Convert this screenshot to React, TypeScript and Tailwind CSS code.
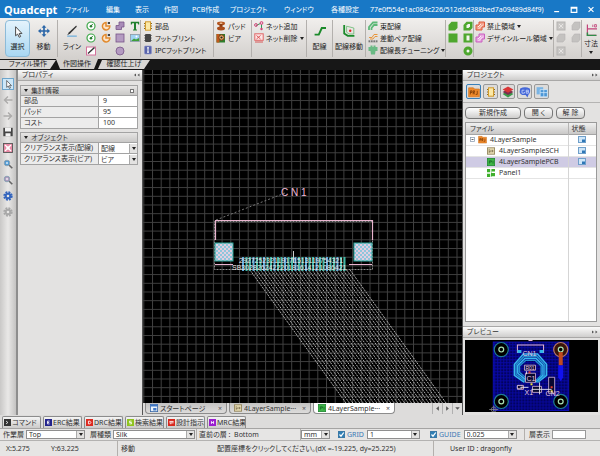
import React from "react";
import type { ReactNode } from "react";

function Ico({ children, className = "h-[10px] w-[10px]" }: { children: ReactNode; className?: string }) {
  return (
    <svg viewBox="0 0 10 10" className={`flex-none ${className}`} aria-hidden="true">
      {children}
    </svg>
  );
}

const Caret = () => (
  <svg viewBox="0 0 4 3" className="h-[3px] w-1 flex-none" aria-hidden="true">
    <path d="M0 0h4L2 3z" fill="#222" />
  </svg>
);

/* ---------- icons ---------- */

const Pointer = ({ className }: { className?: string }) => (
  <Ico className={className}>
    <path d="M3 .6v7.6l1.7-1.5L6 9.4l1.2-.6L6 6.2h2.3z" fill="#fff" stroke="#444" strokeWidth=".8" />
  </Ico>
);
const Move = () => (
  <Ico className="h-3 w-3">
    <path d="M5 0l2 2.3H5.7v2h2V3L10 5 7.7 7V5.700h-2v2H7L5 10 3 7.700h1.300v-2h-2V7L0 5l2.300-2v1.300h2v-2H3z" fill="#2c67a8" />
  </Ico>
);
const LineTool = () => (
  <Ico className="h-3 w-3">
    <path d="M1 8.500L2.500 6 8.500.500 9 1.500 3.500 7z" fill="#333" />
    <path d="M1 9.300h8" stroke="#7db4dc" strokeWidth="1.200" />
  </Ico>
);
const GreenTarget = () => (
  <Ico>
    <circle cx="5" cy="5" r="4" fill="#fff" stroke="#3fa84a" strokeWidth="1.200" />
    <circle cx="5" cy="5.200" r="1.300" fill="#267a30" />
    <path d="M5 5l1.700-2" stroke="#267a30" strokeWidth="1" />
  </Ico>
);
const OrangeArc = () => (
  <Ico>
    <path d="M5 1.500A3.700 3.700 0 1 0 8.800 5H5z" fill="#fbe3c8" stroke="#e28a2d" strokeWidth="1.500" />
    <path d="M6.800 1h2.200v2H6.800z" fill="#444" />
  </Ico>
);
const PurplePoly = () => (
  <Ico>
    <path d="M4 1h5v5H6.500v2.500H1V4.500h3z" fill="#a98bb8" stroke="#775488" strokeWidth=".8" />
  </Ico>
);
const PurpleSquare = () => (
  <Ico>
    <rect x="1" y="1" width="8" height="8" fill="#b49bc1" stroke="#775488" strokeWidth=".8" />
  </Ico>
);
const PurpleCircle = () => (
  <Ico>
    <circle cx="5" cy="5" r="4" fill="#b49bc1" stroke="#775488" strokeWidth=".8" />
  </Ico>
);
const PinkLine = () => (
  <Ico>
    <rect x=".500" y="1" width="9" height="8" fill="#fff" stroke="#d4719b" />
    <path d="M2 7.500L8.500 1.500" stroke="#333" strokeWidth="1.400" />
  </Ico>
);
const TextTool = () => (
  <Ico>
    <path d="M.800.800h8.400v2.700h-1l-.5-1.200H6v6l1 .4v.7H3v-.7l1-.4v-6H2.300l-.5 1.200h-1z" fill="#22812f" />
  </Ico>
);
const Picture = () => (
  <Ico>
    <rect x=".500" y="1.500" width="9" height="7" fill="#9fd3f2" stroke="#8b9aa3" strokeWidth=".8" />
    <path d="M1 8l3-2.500 2 1L9 5v3z" fill="#3f9f3a" />
    <circle cx="6.500" cy="3.500" r="1" fill="#fff" />
  </Ico>
);
const Part = () => (
  <Ico>
    <path d="M1 2.500h8M1 5h8M1 7.500h8" stroke="#8a6a20" strokeWidth="1" />
    <rect x="2.500" y=".8" width="5" height="8.400" fill="#fbe9a8" stroke="#d19a2d" />
  </Ico>
);
const Footprint = ({ fill = "#444" }: { fill?: string }) => (
  <Ico>
    <path d="M1 2.500h8M1 5h8M1 7.500h8" stroke="#888" strokeWidth="1" />
    <rect x="2" y="1" width="6" height="8" rx="1" fill={fill} />
  </Ico>
);
const IpcFootprint = () => (
  <Ico>
    <rect x="1.500" y="1" width="7" height="8" rx="1" fill="#5964ab" stroke="#8d96c9" strokeWidth=".6" />
    <path d="M5 2.800v4.400M4 2.800h2M4 7.200h2" stroke="#fff" strokeWidth="1" />
  </Ico>
);
const Pad = () => (
  <Ico>
    <ellipse cx="5" cy="2.500" rx="4" ry="1.900" fill="#b4551f" />
    <path d="M3.500 3h3v4h-3z" fill="#8c3c12" />
    <ellipse cx="5" cy="7.500" rx="4" ry="1.900" fill="#a94c1b" />
    <ellipse cx="5" cy="2.300" rx="1.500" ry=".7" fill="#f0c49b" />
  </Ico>
);
const Via = () => (
  <Ico>
    <rect x=".500" y="1" width="8.500" height="8.500" fill="#2f7d2c" />
    <rect x=".500" y="1" width="3" height="8.500" fill="#c2571d" />
    <circle cx="5.500" cy="4.500" r="2.700" fill="#e9b06a" stroke="#7b3511" />
    <circle cx="5.500" cy="4.500" r="1.100" fill="#222" />
  </Ico>
);
const NetAdd = () => (
  <Ico>
    <path d="M2 4.500L7.500 2v6" fill="none" stroke="#2d9a53" strokeWidth="1" />
    <circle cx="2" cy="4" r="1.400" fill="none" stroke="#d14479" />
    <circle cx="7.500" cy="2" r="1.400" fill="#f5c3d5" stroke="#d14479" />
    <circle cx="7.500" cy="8" r="1.200" fill="#d14479" />
  </Ico>
);
const NetDel = () => (
  <Ico>
    <rect x=".8" y=".8" width="8.400" height="6.500" fill="#fde4e4" stroke="#e06666" />
    <path d="M2.500 2.500l4 3.500M6.500 2.500l-4 3.500M1 9h8" stroke="#d84a4a" strokeWidth=".9" />
  </Ico>
);
const Route = () => (
  <Ico className="h-3 w-3">
    <path d="M.500 8h3.500L6.500 2.500H10" fill="none" stroke="#1b8a2a" strokeWidth="1.600" />
  </Ico>
);
const RouteMove = () => (
  <Ico className="h-3 w-3">
    <path d="M1 0v7l3 2h5.500" fill="none" stroke="#1b8a2a" strokeWidth="1.500" />
    <path d="M3 1v5l2 1.500h4V2.500z" fill="none" stroke="#6dbb74" strokeWidth=".7" />
    <circle cx="6" cy="4.800" r="1" fill="#d22" />
  </Ico>
);
const Bundle = () => (
  <Ico>
    <path d="M1 9V6L5 1.500h4.500M3.500 9V7L6 4h3.500" fill="none" stroke="#5cb877" strokeWidth="1.800" />
  </Ico>
);
const Pair = () => (
  <Ico>
    <path d="M1 4.500h3L6 1.500h3.500M2 6h3L7 3.500h2.500" fill="none" stroke="#e8963c" strokeWidth="1" />
    <path d="M.500 7.300h9v2h-9z" fill="#777" />
    <path d="M2.500 7v2.500M5 7v2.500M7.500 7v2.500" stroke="#e5e3e0" strokeWidth=".6" />
  </Ico>
);
const Tuning = () => (
  <Ico>
    <path d="M.500 2h2V.500h2V2h1V.500h2V2h2v4h-2l-.5 3.500h-4L2.500 6h-2z" fill="#6aba85" />
  </Ico>
);
const GreenPoly = ({ hole = false }: { hole?: boolean }) => (
  <Ico>
    <path d="M.500 4l3-3.300h6V7l-2.500 2.500H.500z" fill="#4ea72e" />
    {hole && <path d="M3.500 4.500l1.500-1.500h2v2.500L5.500 7h-2z" fill="#f3f6ee" />}
  </Ico>
);
const GreenSquare = ({ hole = false }: { hole?: boolean }) => (
  <Ico>
    <rect x=".500" y=".500" width="9" height="9" fill="#4ea72e" />
    {hole && <rect x="3.500" y="2.500" width="3" height="5" fill="#f3f6ee" />}
  </Ico>
);
const GreenRing = () => (
  <Ico>
    <circle cx="5" cy="5" r="3" fill="#f3f6ee" stroke="#4ea72e" strokeWidth="3" />
  </Ico>
);
const AreaIco = ({ fill, stroke }: { fill: string; stroke: string }) => (
  <Ico>
    <path d="M4 1h5.500v5H7v3H1V4h3z" fill={fill} stroke={stroke} />
    <path d="M3 6l3-3M3.500 8L8 3.500" stroke="#fff" strokeWidth=".8" />
  </Ico>
);
const GraySquare = () => (
  <Ico>
    <rect x="1" y="1" width="8" height="8" fill="#c9c7c5" stroke="#b5b3b1" />
    <path d="M3 3l4 4M7 3L3 7" stroke="#e6e4e2" />
  </Ico>
);
const GrayPoly = () => (
  <Ico>
    <path d="M3.500 1H9v5.500L7 9H1V4.500z" fill="#c4c2c0" stroke="#b5b3b1" strokeWidth=".6" />
  </Ico>
);
const Dimension = () => (
  <Ico className="h-3 w-3">
    <path d="M2 .500v9h7.500M2 4h8" fill="none" stroke="#c2447a" strokeWidth="1" />
    <path d="M2 7v2.500h7.500" fill="none" stroke="#2f8e48" strokeWidth="1.200" />
    <path d="M6.500.500v2M8 .500h1.500v2H8z" fill="none" stroke="#c2447a" strokeWidth=".7" />
  </Ico>
);
const Gear = ({ fill }: { fill: string }) => (
  <Ico>
    <circle cx="5" cy="5" r="3.800" fill="none" stroke={fill} strokeWidth="1.800" strokeDasharray="1.900 1.080" />
    <circle cx="5" cy="5" r="2.300" fill="none" stroke={fill} strokeWidth="2" />
  </Ico>
);
const Lens = ({ fill }: { fill: string }) => (
  <Ico>
    <path d="M6 6l3.300 3.300" stroke="#666" strokeWidth="1.600" />
    <circle cx="4" cy="4" r="2.800" fill={fill} stroke="#8ba3b5" />
    <path d="M2.700 4h2.600M4 2.700v2.600" stroke="#fff" strokeWidth=".8" />
  </Ico>
);
const Arrow = ({ d }: { d: string }) => (
  <Ico>
    <path d={d} fill="none" stroke="#adacab" strokeWidth="1.500" />
  </Ico>
);
const Disk = () => (
  <Ico>
    <path d="M.300.800h9.400v8.400H.300z" fill="#444" />
    <path d="M2 .800h6v3.700H2zM2.500 6.200h5v3h-5z" fill="#f2f2f2" />
  </Ico>
);
const Fit = () => (
  <Ico>
    <rect x=".5" y=".5" width="9" height="9" fill="#e88aa5" stroke="#555" strokeWidth=".9" />
    <path d="M2 2l6 6M8 2L2 8" stroke="#fff" strokeWidth="1.300" />
    <rect x="3.500" y="3.500" width="3" height="3" fill="#fff" />
  </Ico>
);
const Prj = ({ className }: { className?: string }) => (
  <Ico className={className}>
    <path d="M.500 1.500h4l1 1h4V9h-9z" fill="#ef8a2c" stroke="#c96a14" strokeWidth=".5" />
    <path d="M2 7V4h1.300v1.400H2M4.300 7V4h1.200v1.300H4.500L5.700 7M7.700 4v3H6.500" fill="none" stroke="#6d3204" strokeWidth=".6" />
  </Ico>
);
const Layers = () => (
  <Ico className="h-3 w-3">
    <path d="M5 4l4.500 2.700L5 9.500.500 6.700z" fill="#3a9a4a" />
    <path d="M5 2.500l4.500 2.500L5 7.500.500 5z" fill="#7a2f4c" />
    <path d="M5 .500L9.500 3 5 5.700.500 3z" fill="#d93636" />
  </Ico>
);
const GroupBubble = () => (
  <Ico className="h-3 w-3">
    <path d="M1 2q4-2 8 0 1 3-1 5L7 9.500 5.500 7.500Q1 8 .500 5z" fill="#4467d8" />
    <path d="M4.500 3.500h-2v2.500h2V5M6 3.500h1.800v2.500H6zM6 4.700h1.800" fill="none" stroke="#d9e2ff" strokeWidth=".6" />
  </Ico>
);
const Windows = () => (
  <Ico className="h-3 w-3">
    <path d="M.500 1h5.500v6H.500z" fill="#79b4e4" />
    <path d="M3.500 3h6v6h-6z" fill="#4d97d6" stroke="#d6ebfb" strokeWidth=".6" />
    <path d="M3.500 5.500h6M6.500 3v6" stroke="#d6ebfb" strokeWidth=".6" />
  </Ico>
);
const StateIco = () => (
  <svg viewBox="0 0 8 7" className="mx-auto block h-[7px] w-2" role="img" aria-label="open">
    <rect x=".5" y=".5" width="7" height="6" fill="#cfe6f8" stroke="#6f9fca" />
    <rect x="4" y="3.500" width="3" height="2.500" fill="#2e77b7" />
  </svg>
);
const SchIco = () => (
  <Ico className="h-2 w-2">
    <rect x=".5" y="1" width="9" height="8" fill="#e8dcb4" stroke="#8b7d52" />
    <path d="M2 3.500h1.500M2 5h1.500v1.500H2M5 3.500v3M7 3.500v3M7 5h1" stroke="#5c5130" fill="none" strokeWidth=".8" />
  </Ico>
);
const PcbIco = () => (
  <Ico className="h-2 w-2">
    <rect x=".5" y=".5" width="9" height="9" fill="#3fb548" stroke="#218a33" />
    <path d="M3 7V3.500h2.500v1.500H3M7.500 3.500v3.500" stroke="#176a26" fill="none" />
  </Ico>
);
const PanelIco = () => (
  <Ico className="h-2 w-2">
    <path d="M0 0h4v4H0zM6 0h4v3H6zM0 6h4v4H0zM5 5h5v4H5zM5 0h.5v10H5z" fill="#3faf2c" />
  </Ico>
);
const PageIco = () => (
  <Ico className="h-2 w-2">
    <rect x=".5" y=".5" width="9" height="9" fill="#e9f2fb" stroke="#3a68a8" />
    <path d="M.500.500h9v2.500h-9zM4 5h4v3H4z" fill="#3f76c4" />
  </Ico>
);

/* ---------- ribbon ---------- */

const Sep = () => <span className="w-px flex-none self-stretch border-l border-[#b3b0ad] bg-white" />;

function BigTool({ icon, label, active = false, className = "" }: { icon: ReactNode; label: string; active?: boolean; className?: string }) {
  return (
    <button
      type="button"
      className={`flex h-[37px] flex-none flex-col items-center justify-between overflow-hidden whitespace-nowrap pt-1 pb-[5px] ${
        active ? "rounded-sm border border-[#8dbbd8] bg-linear-to-b from-[#e4f3fc] to-[#a9d7f2]" : "border border-transparent"
      } ${className}`}
    >
      {icon}
      <span>{label}</span>
    </button>
  );
}

function SmallTool({ icon, label, menu = false }: { icon: ReactNode; label: string; menu?: boolean }) {
  return (
    <button type="button" className="flex h-3 items-center gap-[2px] whitespace-nowrap">
      {icon}
      <span>{label}</span>
      {menu && <Caret />}
    </button>
  );
}

function IconGrid({ items, className }: { items: [string, ReactNode][]; className: string }) {
  return (
    <div className={`grid flex-none grid-flow-col grid-rows-3 content-start gap-x-1 ${className}`}>
      {items.map(([name, icon], i) =>
        icon ? (
          <button key={i} type="button" aria-label={name} className="flex h-3 w-[10px] items-center">
            {icon}
          </button>
        ) : (
          <span key={i} />
        )
      )}
    </div>
  );
}

function Ribbon() {
  return (
    <div role="toolbar" aria-label="作図操作" className="flex h-[41px] flex-none overflow-hidden bg-linear-to-b from-[#f1efed] to-[#d3d0cd] py-[2px] pl-[5px] text-[#222]">
      <BigTool icon={<Pointer className="mt-px h-3 w-3" />} label="選択" active className="w-[25px]" />
      <BigTool icon={<Move />} label="移動" className="w-[27px]" />
      <Sep />
      <BigTool icon={<LineTool />} label="ライン" className="w-[28px]" />
      <IconGrid
        className="w-[54px]"
        items={[
          ["円", <GreenTarget />],
          ["円弧", <GreenTarget />],
          ["線", <PinkLine />],
          ["円弧 1", <OrangeArc />],
          ["円弧 2", <OrangeArc />],
          ["", null],
          ["多角形", <PurplePoly />],
          ["四角形", <PurpleSquare />],
          ["円形", <PurpleCircle />],
          ["文字", <TextTool />],
          ["画像", <Picture />],
        ]}
      />
      <Sep />
      <div className="flex w-[72px] flex-none flex-col pl-[2px]">
        <SmallTool icon={<Part />} label="部品" />
        <SmallTool icon={<Footprint />} label="フットプリント" />
        <SmallTool icon={<IpcFootprint />} label="IPCフットプリント" />
      </div>
      <Sep />
      <div className="flex w-[37px] flex-none flex-col pl-[2px]">
        <SmallTool icon={<Pad />} label="パッド" />
        <SmallTool icon={<Via />} label="ビア" />
      </div>
      <Sep />
      <div className="flex w-[54px] flex-none flex-col pl-[2px]">
        <SmallTool icon={<NetAdd />} label="ネット追加" />
        <SmallTool icon={<NetDel />} label="ネット削除" menu />
      </div>
      <Sep />
      <BigTool icon={<Route />} label="配線" className="w-[25px]" />
      <Sep />
      <BigTool icon={<RouteMove />} label="配線移動" className="w-8" />
      <Sep />
      <div className="flex w-[79px] flex-none flex-col pl-[2px]">
        <SmallTool icon={<Bundle />} label="束配線" />
        <SmallTool icon={<Pair />} label="差動ペア配線" />
        <SmallTool icon={<Tuning />} label="配線長チューニング" menu />
      </div>
      <Sep />
      <IconGrid
        className="w-[27px] pl-[2px]"
        items={[
          ["ベタ", <GreenPoly />],
          ["ベタ四角", <GreenSquare />],
          ["", null],
          ["ベタ抜き", <GreenPoly hole />],
          ["四角抜き", <GreenSquare hole />],
          ["円抜き", <GreenRing />],
        ]}
      />
      <Sep />
      <div className="flex w-[79px] flex-none flex-col pl-px">
        <SmallTool icon={<AreaIco fill="#f2a08a" stroke="#dd5a3c" />} label="禁止領域" menu />
        <SmallTool icon={<AreaIco fill="#e9a6e0" stroke="#c95fc0" />} label="デザインルール領域" menu />
      </div>
      <Sep />
      <IconGrid
        className="w-[27px] pl-[2px]"
        items={[
          ["編集 1", <GraySquare />],
          ["編集 2", <GrayPoly />],
          ["編集 3", <GraySquare />],
          ["編集 4", <GrayPoly />],
          ["編集 5", <GrayPoly />],
        ]}
      />
      <Sep />
      <button type="button" className="flex h-[37px] min-w-4 flex-1 flex-col items-center gap-[3px] whitespace-nowrap pt-1">
        <Dimension />
        <span>寸法</span>
        <Caret />
      </button>
    </div>
  );
}

function RibbonTabs() {
  return (
    <div role="tablist" aria-label="操作" className="flex h-[11px] flex-none bg-[#171717] leading-[10px] text-[#222]">
      <button type="button" role="tab" aria-selected="false" className="h-[10px] w-14 bg-[#d9d7d5] [clip-path:polygon(0_1px,100%_1px,50px_100%,0_100%)]">
        ファイル操作
      </button>
      <button type="button" role="tab" aria-selected="true" className="h-[10px] w-[42px] bg-[#d3d0cd] [clip-path:polygon(0_0,100%_0,38px_100%,4px_100%)]">
        作図操作
      </button>
      <button type="button" role="tab" aria-selected="false" className="h-[10px] w-[52px] bg-[#d9d7d5] [clip-path:polygon(4px_1px,100%_1px,46px_100%,0_100%)]">
        確認仕上げ
      </button>
    </div>
  );
}

/* ---------- left side ---------- */

function SideTools() {
  const items: [string, ReactNode][] = [
    ["戻る", <Arrow d="M5 1.500L1.500 5 5 8.500M1.500 5h8" />],
    ["進む", <Arrow d="M5 1.500L8.500 5 5 8.500M8.500 5h-8" />],
    ["保存", <Disk />],
    ["全体表示", <Fit />],
    ["拡大", <Lens fill="#3d8fd0" />],
    ["縮小", <Lens fill="#a58fb5" />],
    ["設定", <Gear fill="#3465bd" />],
    ["オプション", <Gear fill="#a8a8a8" />],
  ];
  return (
    <div className="flex w-[18px] flex-none flex-col items-center gap-1 border-r-2 border-[#8e8e8e] bg-linear-to-r from-[#c9c8c7] via-[#e9e8e7] to-[#c4c3c2] pt-2">
      <button type="button" aria-label="選択" className="flex h-3 w-3 flex-none items-center justify-center border border-[#6ea5cb] bg-[#cde7f8]">
        <Pointer className="h-[9px] w-[9px]" />
      </button>
      {items.map(([n, i]) => (
        <button key={n} type="button" aria-label={n} className="flex h-3 w-3 flex-none items-center justify-center">
          {i}
        </button>
      ))}
    </div>
  );
}

function PanelTitle({ title, flip = false }: { title: string; flip?: boolean }) {
  return (
    <h2 className="flex h-[11px] flex-none items-center justify-between border-b border-[#a9a8a7] bg-linear-to-b from-[#fbfbfb] to-[#cfcecd] pr-[2px] pl-1 leading-[10px]">
      <span>{title}</span>
      <svg viewBox="0 0 6 4" className="h-1 w-[6px]" aria-hidden="true">
        <path d={flip ? "M0 .5L2 2 0 3.500zM3.500 .5l2 1.500-2 1.500z" : "M2 .5L0 2l2 1.500zM5.500 .5l-2 1.500 2 1.500z"} fill="#555" />
      </svg>
    </h2>
  );
}

function Combo({ label, value, className = "" }: { label: string; value: string; className?: string }) {
  return (
    <span className={`relative flex h-[9px] flex-none border border-[#8f8f8f] bg-white ${className}`}>
      <select aria-label={label} defaultValue={value} className="min-w-0 flex-1 appearance-none pl-[2px] leading-[7px] text-[#333] outline-none">
        <option>{value}</option>
      </select>
      <span className="pointer-events-none flex w-2 items-center justify-center border-l border-[#aaa] bg-[#e3e2e1]">
        <Caret />
      </span>
    </span>
  );
}

function PropertyHead({ title, pin = false }: { title: string; pin?: boolean }) {
  return (
    <caption className="h-[10px] border border-b-0 border-[#a3a3a3] bg-linear-to-b from-[#e6e5e4] to-[#c9c8c7] px-[3px]">
      <span className="flex h-[9px] items-center gap-[3px]">
        <Caret />
        <span className="flex-1 text-left">{title}</span>
        {pin && <span className="h-1 w-1 border border-[#777] bg-white" />}
      </span>
    </caption>
  );
}

const cell = "h-[11px] border border-[#a3a3a3] py-0 text-left font-normal leading-[10px] whitespace-nowrap";

function Properties() {
  return (
    <section className="flex w-[125px] flex-none flex-col border-r border-[#555] bg-[#e3e2e1] text-[#333]">
      <PanelTitle title="プロパティ" />
      <div className="flex flex-col gap-[3px] pt-1 pr-1 pl-[2px]">
        <table className="w-full table-fixed border-collapse">
          <PropertyHead title="集計情報" pin />
          <tbody>
            {[
              ["部品", "9"],
              ["パッド", "95"],
              ["コスト", "100"],
            ].map(([k, v]) => (
              <tr key={k}>
                <th scope="row" className={`w-2/3 bg-[#ececec] pl-[3px] ${cell}`}>{k}</th>
                <td className={`bg-white pl-1 ${cell}`}>{v}</td>
              </tr>
            ))}
          </tbody>
        </table>
        <table className="w-full table-fixed border-collapse">
          <PropertyHead title="オブジェクト" />
          <tbody>
            {[
              ["クリアランス表示(配線)", "配線"],
              ["クリアランス表示(ビア)", "ビア"],
            ].map(([k, v]) => (
              <tr key={k}>
                <th scope="row" className={`w-2/3 bg-[#ececec] pl-[3px] ${cell}`}>{k}</th>
                <td className={`bg-white ${cell}`}>
                  <Combo label={k} value={v} className="border-none" />
                </td>
              </tr>
            ))}
          </tbody>
        </table>
      </div>
    </section>
  );
}

/* ---------- board canvas ---------- */

function Board() {
  const nets = Array.from({ length: 30 }, (_, i) => 250 + i * 3.45);
  const pins = Array.from({ length: 30 }, (_, i) => 242 + i * 3.5);
  return (
    <svg className="block min-h-0 w-full flex-1 bg-black" role="img" aria-label="PCB">
      <defs>
        <pattern id="grid" width="8.7" height="8.7" patternUnits="userSpaceOnUse" x="9" y="4">
          <path d="M.5 0v8.700M0 .5h8.700" stroke="#404040" strokeWidth="1" />
        </pattern>
        <pattern id="hatch" width="4" height="4" patternUnits="userSpaceOnUse">
          <rect width="4" height="4" fill="#8fc6dc" />
          <path d="M0 0h2v2H0zM2 2h2v2H2z" fill="#e3cfe0" />
        </pattern>
      </defs>
      <rect width="100%" height="100%" fill="url(#grid)" />
      <g transform="translate(-143 -70)">
        {nets.map((x) => (
          <path key={x} d={`M${x} 270L${x + 101} 410`} stroke="#c4c4c4" strokeWidth=".9" strokeDasharray="2 1" />
        ))}
        <path d="M216 220L285 193" stroke="#777" strokeDasharray="2 2" />
        <rect x="214.500" y="221.500" width="158" height="48" fill="none" stroke="#8a8a8a" strokeDasharray="2 1" />
        <path d="M215.500 240V220.500H372.500V240M215 264.500h18M349 264.500h23" fill="none" stroke="#e9b4cf" strokeWidth="1.200" />
        <rect x="215" y="243" width="18" height="18" fill="url(#hatch)" stroke="#2aa597" />
        <rect x="354" y="243" width="18" height="18" fill="url(#hatch)" stroke="#2aa597" />
        {pins.map((x, i) => (
          <rect key={x} x={x} y="257" width="2" height="14" fill={i % 3 ? "#3fb6a4" : "#5aa9dc"} />
        ))}
        <path d="M293.500 251v12" stroke="#ccc" />
        <g fill="#e6e6e6" fontSize="7" fontFamily="Liberation Sans, sans-serif">
          <text x="239" y="263">292725232119171513119754321</text>
          <text x="232" y="270">SB302826242220181614121086421</text>
        </g>
        <text x="281" y="196" fill="#f0b9d6" fontSize="10" fontFamily="Liberation Sans, sans-serif">C N 1</text>
      </g>
    </svg>
  );
}

function DocTab({ icon, label, active = false }: { icon: ReactNode; label: string; active?: boolean }) {
  return (
    <div
      className={`flex h-[11px] w-[82px] flex-none items-center gap-[2px] rounded-b-sm border border-t-0 border-[#8c8c8c] px-1 ${
        active ? "bg-white" : "bg-linear-to-b from-[#c4c3c2] to-[#dddcdb]"
      }`}
    >
      {icon}
      <button type="button" role="tab" aria-selected={active} className="flex-1 truncate text-left">
        {label}
      </button>
      <button type="button" aria-label="閉じる" className="text-[#555]">×</button>
    </div>
  );
}

function Workspace() {
  return (
    <main className="flex min-w-0 flex-1 flex-col">
      <Board />
      <div className="flex h-3 flex-none items-start bg-[#dddcdb] pl-[2px] text-[#333]">
        <div role="tablist" aria-label="ドキュメント" className="flex flex-1 gap-[2px]">
          <DocTab icon={<PageIco />} label="スタートページ" />
          <DocTab icon={<SchIco />} label="4LayerSample···" />
          <DocTab icon={<PcbIco />} label="4LayerSample···" active />
        </div>
        {["M6.500 2.500v5L3.500 5z", "M3.500 2.500v5L6.500 5z", "M2.500 3.500h5L5 6.500z"].map((d, i) => (
          <button key={d} type="button" aria-label={["前へ", "次へ", "一覧"][i]} className="flex h-[11px] w-[10px] items-center border-l border-[#b0b0b0]">
            <Ico className="h-[9px] w-[9px]"><path d={d} fill="#555" /></Ico>
          </button>
        ))}
      </div>
    </main>
  );
}

/* ---------- project side ---------- */

function ProjectPanel() {
  const rows: [string, ReactNode, boolean][] = [
    ["4LayerSampleSCH", <SchIco />, true],
    ["4LayerSamplePCB", <PcbIco />, true],
    ["Panel1", <PanelIco />, false],
  ];
  const tools: [string, ReactNode][] = [
    ["プロジェクト", <Prj className="h-3 w-3" />],
    ["部品", <Part />],
    ["層", <Layers />],
    ["グループ", <GroupBubble />],
    ["ウィンドウ", <Windows />],
  ];
  const push = "h-3 rounded-sm border border-[#777] bg-linear-to-b from-white to-[#cfcecd] leading-[10px]";
  return (
    <aside className="flex w-[138px] flex-none flex-col border-l border-[#555] bg-[#e3e2e1] text-[#333]">
      <PanelTitle title="プロジェクト" flip />
      <div className="flex h-[22px] flex-none gap-[2px] border-b border-[#b5b4b3] pt-[3px] pl-[3px]">
        {tools.map(([n, i], k) => (
          <button
            key={n}
            type="button"
            aria-label={n}
            className={`flex h-[15px] w-[15px] items-center justify-center rounded-xs border bg-[#dcdbda] ${k === 0 ? "border-[#3a7fb8] bg-[#c5e0f3]" : "border-[#999]"}`}
          >
            {i}
          </button>
        ))}
      </div>
      <div className="flex flex-none gap-[3px] px-[2px] pt-1 pb-[3px]">
        <button type="button" className={`w-14 ${push}`}>新規作成</button>
        <button type="button" className={`w-[29px] ${push}`}>開 く</button>
        <button type="button" className={`w-[29px] ${push}`}>解 除</button>
      </div>
      <div className="mr-[3px] ml-[2px] flex min-h-0 flex-1 flex-col border border-[#9a9a9a] bg-white">
        <table className="w-full table-fixed border-collapse">
          <thead className="bg-linear-to-b from-[#f0f0f0] to-[#c9c8c7]">
            <tr className="h-[11px] border-b border-[#a5a5a5]">
              <th scope="col" className="py-0 pl-1 text-left font-normal">ファイル</th>
              <th scope="col" className="w-7 border-l border-[#b5b4b3] py-0 pl-[3px] text-left font-normal">状態</th>
            </tr>
          </thead>
          <tbody>
            <tr className="h-[11px] border-b border-[#e4e4e4]">
              <td className="p-0">
                <span className="flex items-center gap-[3px] pl-1">
                  <Ico className="h-[5px] w-[5px]">
                    <rect x="1" y="1" width="8" height="8" fill="#fff" stroke="#8a9cb0" strokeWidth="1.500" />
                    <path d="M3 5h4" stroke="#333" strokeWidth="1.500" />
                  </Ico>
                  <Prj className="h-[9px] w-[9px]" />
                  4LayerSample
                </span>
              </td>
              <td className="border-l border-[#d5d5d5] p-0"><StateIco /></td>
            </tr>
            {rows.map(([name, icon, open], i) => (
              <tr key={name} className={`h-[11px] border-b border-[#e4e4e4] ${i === 1 ? "bg-[#cfcbe4]" : ""}`}>
                <td className="p-0">
                  <span className="flex items-center gap-1 pl-[21px]">
                    {icon}
                    {name}
                  </span>
                </td>
                <td className="border-l border-[#d5d5d5] p-0">{open && <StateIco />}</td>
              </tr>
            ))}
          </tbody>
        </table>
        <div className="mr-[27px] flex flex-1 flex-col overflow-hidden border-r border-[#d5d5d5]" />
      </div>
      <div className="mt-1 flex flex-none flex-col border-t border-[#a9a8a7]">
        <PanelTitle title="プレビュー" flip />
        <div className="px-[2px] pt-[2px] pb-[3px]">
          <Preview />
        </div>
      </div>
    </aside>
  );
}

function Preview() {
  const rings = [0, 1, 2, 3];
  const holes = [[502, 350.5], [561, 350.5], [502, 402], [561, 402]];
  return (
    <svg viewBox="466 341 132 71" className="block w-full bg-black" role="img" aria-label="プレビュー">
      <defs>
        <pattern id="copper" width="3" height="3" patternUnits="userSpaceOnUse">
          <rect width="3" height="3" fill="#020260" />
          <path d="M0 .5h3M.5 0v3" stroke="#0808a8" strokeWidth=".8" />
        </pattern>
      </defs>
      <rect x="494" y="343" width="75" height="68" fill="url(#copper)" stroke="#1010c8" strokeWidth=".8" />
      {rings.map((r) => (
        <path
          key={r}
          d={`M${525 + r} ${383 - r}l${-10 + r * 0.7} -7V${365 + r * 0.6}L${524 + r * 0.8} ${355 + r * 2}h${14 - r * 1.6}L${547 - r * 1.8} ${365 + r * 0.6}V376l${-9 + r * 0.7} 7`}
          fill="none"
          stroke={r % 2 ? "#2390cf" : "#38b8ee"}
          strokeWidth="1.500"
        />
      ))}
      <path d="M518 354v-8h26v8" fill="none" stroke="#e8b6d0" strokeWidth="1" />
      <path d="M518 351h4v3h-4zM540 351h4v3h-4z" fill="#2fb4ec" />
      <path d="M529 341.500h4" stroke="#e8b6d0" />
      <path d="M558.500 366h5v12l-2.500 4-2.500-4z" fill="#1111ee" />
      {holes.map(([x, y]) => (
        <g key={`${x}-${y}`}>
          <circle cx={x} cy={y} r="7" fill={y < 360 && x > 550 ? "#3a1408" : "#000"} stroke={y < 360 && x > 550 ? "#b5776a" : "#1f7f96"} strokeWidth="1.200" />
          <circle cx={x} cy={y} r="2.400" fill="#000" stroke="#a9e0b4" strokeWidth="1.200" />
        </g>
      ))}
      <rect x="559" y="353" width="4" height="13" fill="#c04a20" />
      <g fill="#080830" stroke="#d9b9d9" strokeWidth=".8">
        <path d="M525 366h11v5h-11zM526 374h10v9h-10zM549 378h6v16h-6zM533 387h9v6h-9zM518 386h6v4h-6z" />
      </g>
      <path d="M532 390h20M527 372v3M540 383v12M521 388h8" stroke="#e6e6f2" strokeWidth=".9" />
      <path d="M529 372h2v2h-2zM551 387h2v2h-2z" fill="#e23b2e" />
      <path d="M531 384h2v2h-2zM551 391h2v2h-2z" fill="#f2e33a" />
      <g fill="#e3c6e3" fontFamily="Liberation Sans, sans-serif" fontSize="7">
        <text x="523" y="357">CN1</text>
        <text x="527" y="382">C1</text>
        <text x="525" y="396">X1</text>
        <text x="546" y="397">CN2</text>
        <text x="526" y="371" fontSize="5">R01</text>
        <text x="517" y="390" fontSize="5">C2</text>
      </g>
      <path d="M490 410h9M494.500 406v6" stroke="#999" strokeWidth=".7" />
      <circle cx="494.500" cy="410" r="2.500" fill="none" stroke="#888" strokeWidth=".7" />
    </svg>
  );
}

/* ---------- bottom ---------- */

function BottomTabs() {
  const tabs: [string, string, string][] = [
    ["コマンド", "#333", "M3 3l2.500 2L3 7"],
    ["ERC結果", "#23238c", "M6.500 3h-3v4h3M3.500 5h2.500"],
    ["DRC結果", "#dc2a20", "M3.500 3h2l1.500 2-1.500 2h-2z"],
    ["検索結果", "#8fc31f", "M6.500 3h-3v2h3v2h-3"],
    ["設計指示", "#d8281e", "M2 3.500h6M2 5.500h6M4 5.500v2"],
    ["MRC結果", "#9b1fcf", "M3.500 3v4M6.500 3v4M3.500 5h3"],
  ];
  return (
    <div role="tablist" aria-label="結果" className="flex h-[14px] flex-none items-end gap-[2px] border-b border-[#a5a4a3] bg-[#dddcdb] pl-[2px]">
      {tabs.map(([label, color, d], i) => (
        <button
          key={label}
          type="button"
          role="tab"
          aria-selected={i === 0}
          className="flex h-3 w-[39px] flex-none items-center gap-px overflow-hidden rounded-t-xs border border-b-0 border-[#8c8c8c] bg-linear-to-b from-[#f4f4f4] to-[#cccbca] pl-px whitespace-nowrap"
        >
          <Ico className="h-[7px] w-[7px]">
            <rect width="10" height="10" fill={color} />
            <path d={d} fill="none" stroke="#fff" strokeWidth="1.200" />
          </Ico>
          {label}
        </button>
      ))}
    </div>
  );
}

const Check = ({ id, label }: { id: string; label: string }) => (
  <label htmlFor={id} className="flex items-center gap-[2px] text-[#3a78b5]">
    <span className="relative flex h-[7px] w-[7px]">
      <input id={id} type="checkbox" defaultChecked className="h-[7px] w-[7px] appearance-none border border-[#3b78a5] bg-[#d7ebf8] checked:bg-[#2f7fb5]" />
      <svg viewBox="0 0 7 7" className="pointer-events-none absolute inset-0" aria-hidden="true">
        <path d="M1.500 3.500L3 5.200 5.800 1.500" fill="none" stroke="#fff" strokeWidth="1.200" />
      </svg>
    </span>
    {label}
  </label>
);

function LayerBar() {
  return (
    <div className="flex h-3 flex-none items-center overflow-hidden border-b border-[#b3b2b1] bg-[#e6e5e4] pl-[3px] whitespace-nowrap">
      <div className="flex w-[87px] flex-none items-center gap-[2px]">
        <span>作業層</span>
        <Combo label="作業層" value="Top" className="w-[59px]" />
      </div>
      <div className="flex w-[106px] flex-none items-center gap-[2px]">
        <span>層種類</span>
        <Combo label="層種類" value="Silk" className="w-[82px]" />
      </div>
      <Sep />
      <span className="w-[103px] flex-none pl-[2px]">直前の層 : &nbsp;Bottom</span>
      <Sep />
      <Combo label="単位" value="mm" className="mr-2 w-[29px]" />
      <div className="flex w-[92px] flex-none items-center gap-[3px]">
        <Check id="grid-on" label="GRID" />
        <Combo label="グリッド" value="1" className="w-[53px]" />
      </div>
      <div className="flex w-[94px] flex-none items-center gap-[3px]">
        <Check id="guide-on" label="GUIDE" />
        <Combo label="ガイド" value="0.025" className="w-[53px]" />
      </div>
      <Sep />
      <label className="flex items-center gap-[2px] pl-1">
        層表示
        <input type="text" className="h-[9px] w-[34px] border border-[#999] bg-white" />
      </label>
    </div>
  );
}

function StatusBar() {
  return (
    <footer className="flex h-[15px] flex-none items-center bg-[#e6e5e4] pl-[6px] whitespace-nowrap">
      <span className="w-[45px] flex-none">X:5.275</span>
      <span className="w-[66px] flex-none">Y:63.225</span>
      <Sep />
      <span className="w-[99px] flex-none pl-[3px]">移動</span>
      <span className="w-[216px] flex-none">配置座標をクリックしてください。(dX =-19.225, dy=25.225)</span>
      <Sep />
      <span className="pl-4">User ID : dragonfly</span>
    </footer>
  );
}

function TitleBar() {
  const menus: [string, string][] = [
    ["ファイル", "w-[41px]"],
    ["編集", "w-[29px]"],
    ["表示", "w-[29px]"],
    ["作図", "w-[28px]"],
    ["PCB作成", "w-[38px]"],
    ["プロジェクト", "w-[54px]"],
    ["ウィンドウ", "w-[47px]"],
    ["各種設定", "w-[39px]"],
  ];
  return (
    <header className="flex h-[18px] flex-none items-center overflow-hidden bg-[#1878c6] pl-1 whitespace-nowrap text-white">
      <h1 className="w-[61px] flex-none font-['Noto_Sans',sans-serif] text-[11px] font-bold">Quadcept</h1>
      <nav className="flex flex-none">
        {menus.map(([m, w]) => (
          <button key={m} type="button" className={`flex-none text-left ${w}`}>
            {m}
          </button>
        ))}
      </nav>
      <span className="min-w-0 flex-1">77e0f554e1ac084c226/512d6d388bed7a09489d84f9)</span>
      <div className="flex flex-none gap-[9px] pr-[5px]">
        {["M1 8h7", "M1 2h8v7H1zM1 3h8", "M1.500 1.500l7 7M8.500 1.500l-7 7"].map((d, i) => (
          <button key={d} type="button" aria-label={["最小化", "最大化", "閉じる"][i]}>
            <Ico className="h-[7px] w-[8px]">
              <path d={d} fill="none" stroke="#fff" strokeWidth="1.700" />
            </Ico>
          </button>
        ))}
      </div>
    </header>
  );
}

export default function App() {
  return (
    <div className="flex h-screen flex-col overflow-hidden bg-[#171717] font-['Noto_Sans','Noto_Sans_CJK_JP',sans-serif] text-[7px] leading-[9px] text-[#333] [font-feature-settings:'palt']">
      <TitleBar />
      <Ribbon />
      <RibbonTabs />
      <div className="flex min-h-0 flex-1">
        <SideTools />
        <Properties />
        <Workspace />
        <ProjectPanel />
      </div>
      <BottomTabs />
      <LayerBar />
      <StatusBar />
    </div>
  );
}
